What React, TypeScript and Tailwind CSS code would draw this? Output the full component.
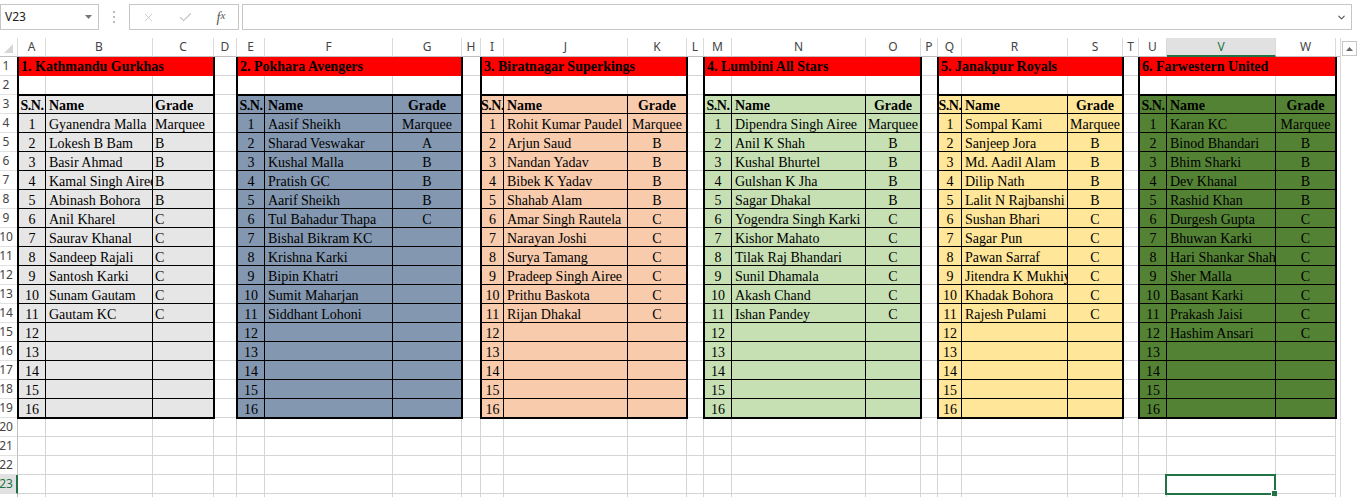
import React from "react";
import { X, Check, ChevronDown } from "lucide-react";

type Team = {
  title: string;
  place: string;
  fill: string;
  cols: string;
  gradeLeft?: boolean;
  players: [string, string][];
};

// 6 teams, each is 3 columns wide (S.N., Name, Grade)
const teams: Team[] = [
  {
    title: "1. Kathmandu Gurkhas",
    place: "col-start-2",
    fill: "bg-[#e7e6e6]",
    cols: "grid-cols-[27px_107px_1fr]",
    gradeLeft: true,
    players: [
      ["Gyanendra Malla", "Marquee"],
      ["Lokesh B Bam", "B"],
      ["Basir Ahmad", "B"],
      ["Kamal Singh Airee", "B"],
      ["Abinash Bohora", "B"],
      ["Anil Kharel", "C"],
      ["Saurav Khanal", "C"],
      ["Sandeep Rajali", "C"],
      ["Santosh Karki", "C"],
      ["Sunam Gautam", "C"],
      ["Gautam KC", "C"],
    ],
  },
  {
    title: "2. Pokhara Avengers",
    place: "col-start-6",
    fill: "bg-[#8497b0]",
    cols: "grid-cols-[27px_128px_1fr]",
    players: [
      ["Aasif Sheikh", "Marquee"],
      ["Sharad Veswakar", "A"],
      ["Kushal Malla", "B"],
      ["Pratish GC", "B"],
      ["Aarif Sheikh", "B"],
      ["Tul Bahadur Thapa", "C"],
      ["Bishal Bikram KC", ""],
      ["Krishna Karki", ""],
      ["Bipin Khatri", ""],
      ["Sumit Maharjan", ""],
      ["Siddhant Lohoni", ""],
    ],
  },
  {
    title: "3. Biratnagar Superkings",
    place: "col-start-10",
    fill: "bg-[#f8cbad]",
    cols: "grid-cols-[22px_124px_1fr]",
    players: [
      ["Rohit Kumar Paudel", "Marquee"],
      ["Arjun Saud", "B"],
      ["Nandan Yadav", "B"],
      ["Bibek K Yadav", "B"],
      ["Shahab Alam", "B"],
      ["Amar Singh Rautela", "C"],
      ["Narayan Joshi", "C"],
      ["Surya Tamang", "C"],
      ["Pradeep Singh Airee", "C"],
      ["Prithu Baskota", "C"],
      ["Rijan Dhakal", "C"],
    ],
  },
  {
    title: "4. Lumbini All Stars",
    place: "col-start-14",
    fill: "bg-[#c6e0b4]",
    cols: "grid-cols-[27px_134px_1fr]",
    players: [
      ["Dipendra Singh Airee", "Marquee"],
      ["Anil K Shah", "B"],
      ["Kushal Bhurtel", "B"],
      ["Gulshan K Jha", "B"],
      ["Sagar Dhakal", "B"],
      ["Yogendra Singh Karki", "C"],
      ["Kishor Mahato", "C"],
      ["Tilak Raj Bhandari", "C"],
      ["Sunil Dhamala", "C"],
      ["Akash Chand", "C"],
      ["Ishan Pandey", "C"],
    ],
  },
  {
    title: "5. Janakpur Royals",
    place: "col-start-18",
    fill: "bg-[#ffe699]",
    cols: "grid-cols-[23px_106px_1fr]",
    players: [
      ["Sompal Kami", "Marquee"],
      ["Sanjeep Jora", "B"],
      ["Md. Aadil Alam", "B"],
      ["Dilip Nath", "B"],
      ["Lalit N Rajbanshi", "B"],
      ["Sushan Bhari", "C"],
      ["Sagar Pun", "C"],
      ["Pawan Sarraf", "C"],
      ["Jitendra K Mukhiya", "C"],
      ["Khadak Bohora", "C"],
      ["Rajesh Pulami", "C"],
    ],
  },
  {
    title: "6. Farwestern United",
    place: "col-start-22",
    fill: "bg-[#548235]",
    cols: "grid-cols-[27px_109px_1fr]",
    players: [
      ["Karan KC", "Marquee"],
      ["Binod Bhandari", "B"],
      ["Bhim Sharki", "B"],
      ["Dev Khanal", "B"],
      ["Rashid Khan", "B"],
      ["Durgesh Gupta", "C"],
      ["Bhuwan Karki", "C"],
      ["Hari Shankar Shah", "C"],
      ["Sher Malla", "C"],
      ["Basant Karki", "C"],
      ["Prakash Jaisi", "C"],
      ["Hashim Ansari", "C"],
    ],
  },
];

const letters = "ABCDEFGHIJKLMNOPQRSTUVW".split("");

function FormulaBar() {
  return (
    <div className="flex h-[38px] items-start bg-white pt-[4px] font-['Noto_Sans',sans-serif]">
      <div className="flex h-[26px] w-[99px] items-center justify-between border border-[#c6c6c6] pr-[6px] pl-[4px] text-[12px] text-[#222]">
        <span>V23</span>
        <svg width="7" height="4" viewBox="0 0 7 4">
          <polygon points="0,0 7,0 3.5,4" fill="#777" />
        </svg>
      </div>
      <div className="flex h-[26px] w-[30px] items-center justify-center">
        <svg width="3" height="12" viewBox="0 0 3 12">
          <rect x="0" y="0" width="2" height="2" fill="#bbb" />
          <rect x="0" y="5" width="2" height="2" fill="#bbb" />
          <rect x="0" y="10" width="2" height="2" fill="#bbb" />
        </svg>
      </div>
      <div className="flex h-[26px] w-[110px] items-center border border-[#c6c6c6]">
        <span className="flex w-[37px] justify-center text-[#c4c4c4]">
          <X size={13} strokeWidth={1.6} />
        </span>
        <span className="flex w-[37px] justify-center text-[#c4c4c4]">
          <Check size={15} strokeWidth={1.8} />
        </span>
        <span className="flex w-[34px] justify-center font-['Liberation_Serif',serif] text-[14px] text-[#555] italic">
          f<span className="text-[11px]">x</span>
        </span>
      </div>
      <div className="ml-[3px] mr-[6px] flex h-[26px] flex-1 items-center justify-end border border-[#c6c6c6] pr-[4px] text-[#555]">
        <ChevronDown size={11} strokeWidth={2.4} />
      </div>
    </div>
  );
}

function Corner() {
  return (
    <div className="flex items-end justify-end border-r border-b border-r-[#dadada] border-b-[#bfbfbf] pr-[4px] pb-[3px]">
      <svg width="9" height="9" viewBox="0 0 9 9">
        <polygon points="9,0 9,9 0,9" fill="#d6d6d6" />
      </svg>
    </div>
  );
}

function ColHead({ label, active }: { label: string; active: boolean }) {
  if (active) {
    return (
      <div className="flex items-center justify-center border-r border-b-2 border-r-[#dadada] border-b-[#217346] bg-[#e1e1e1] text-[12px] text-[#217346]">
        {label}
      </div>
    );
  }
  return (
    <div className="flex items-center justify-center border-r border-b border-r-[#dadada] border-b-[#bfbfbf] text-[12px] text-[#444]">
      {label}
    </div>
  );
}

function RowHead({ n, active }: { n: number; active: boolean }) {
  if (active) {
    return (
      <div className="flex items-center justify-center overflow-visible border-r-2 border-b border-r-[#217346] border-b-[#e1e1e1] bg-[#e1e1e1] pr-[4px] text-[12px] text-[#217346]">
        {n}
      </div>
    );
  }
  return (
    <div className="flex items-center justify-center overflow-visible border-r border-b border-r-[#bfbfbf] border-b-[#e1e1e1] pr-[5px] text-[12px] text-[#444]">
      {n}
    </div>
  );
}

function GridCell({ filler, selected }: { filler: boolean; selected: boolean }) {
  if (filler) return <div className="bg-white" />;
  return (
    <div className="relative border-r border-b border-[#d4d4d4]">
      {selected && (
        <div className="absolute -top-px -right-px -bottom-[2px] -left-[2px] z-10 border-2 border-[#217346]">
          <div className="absolute -right-[3px] -bottom-[3px] h-[6px] w-[6px] border-t border-l border-white bg-[#217346]" />
        </div>
      )}
    </div>
  );
}

function TeamTable({ team }: { team: Team }) {
  const rows: [string, string, string][] = [["S.N.", "Name", "Grade"]];
  for (let i = 0; i < 16; i++) {
    const p = team.players[i];
    rows.push([String(i + 1), p ? p[0] : "", p ? p[1] : ""]);
  }

  return (
    <div
      className={`${team.place} row-start-2 col-span-3 row-span-19 -mr-px -mb-px -ml-px z-20 flex flex-col border-x-2 border-b-2 border-black font-['Liberation_Serif','Times_New_Roman',serif] text-[14px] text-black`}
    >
      <div className="flex h-[19px] items-end bg-[#ff0000] pb-[2px] pl-[2px] leading-[15px] font-bold whitespace-nowrap">
        {team.title}
      </div>
      <div className={`grid h-[18px] bg-white ${team.cols}`}>
        <div className="border-r border-[#d4d4d4]" />
        <div className="border-r border-[#d4d4d4]" />
        <div />
      </div>
      <div
        className={`grid flex-1 border-t-2 border-black ${team.fill} ${team.cols} grid-rows-[18px_repeat(15,19px)_18px]`}
      >
        {rows.map((row, ri) => {
          const last = ri === rows.length - 1;
          const head = ri === 0;
          const rb = last ? "" : "border-b border-black";
          return (
            <React.Fragment key={ri}>
              <div
                className={`flex items-end justify-center overflow-hidden border-r border-black leading-[15px] whitespace-nowrap ${rb} ${head ? "font-bold tracking-[-0.5px]" : ""}`}
              >
                {row[0]}
              </div>
              <div
                className={`flex items-end overflow-hidden border-r border-black pl-[3px] leading-[15px] whitespace-nowrap ${rb} ${head ? "font-bold" : ""}`}
              >
                {row[1]}
              </div>
              <div
                className={`flex items-end overflow-hidden leading-[15px] whitespace-nowrap ${rb} ${head ? "font-bold" : ""} ${team.gradeLeft ? "pl-[2px]" : "justify-center"}`}
              >
                {row[2]}
              </div>
            </React.Fragment>
          );
        })}
      </div>
    </div>
  );
}

function Sheet() {
  const cells: React.ReactNode[] = [<Corner key="corner" />];
  letters.forEach((l) => cells.push(<ColHead key={l} label={l} active={l === "V"} />));
  cells.push(<div key="hfill" className="border-b border-[#bfbfbf]" />);

  for (let r = 1; r <= 24; r++) {
    cells.push(<RowHead key={`rh${r}`} n={r} active={r === 23} />);
    for (let c = 0; c < 24; c++) {
      const inTable = r <= 19 && c < 23 && c % 4 !== 3;
      if (inTable) continue;
      cells.push(<GridCell key={`${r}-${c}`} filler={c === 23} selected={r === 23 && c === 21} />);
    }
  }

  return (
    <div className="grid flex-1 auto-rows-[19px] grid-cols-[18px_28px_107px_61px_23px_28px_128px_69px_19px_23px_124px_59px_17px_28px_134px_55px_17px_24px_106px_55px_16px_28px_109px_60px_4px] font-['Noto_Sans',sans-serif]">
      {cells}
      {teams.map((t) => (
        <TeamTable key={t.title} team={t} />
      ))}
    </div>
  );
}

function ScrollBar() {
  return (
    <div className="flex w-[18px] flex-col border-l border-[#dadada] bg-white pt-[3px] pl-px">
      <div className="flex h-[15px] w-[15px] items-center justify-center border border-[#c6c6c6]">
        <svg width="7" height="4" viewBox="0 0 7 4">
          <polygon points="3.5,0 7,4 0,4" fill="#666" />
        </svg>
      </div>
    </div>
  );
}

export default function App() {
  return (
    <div className="h-[497px] w-[1358px] overflow-hidden bg-white">
      <FormulaBar />
      <div className="flex">
        <Sheet />
        <ScrollBar />
      </div>
    </div>
  );
}
